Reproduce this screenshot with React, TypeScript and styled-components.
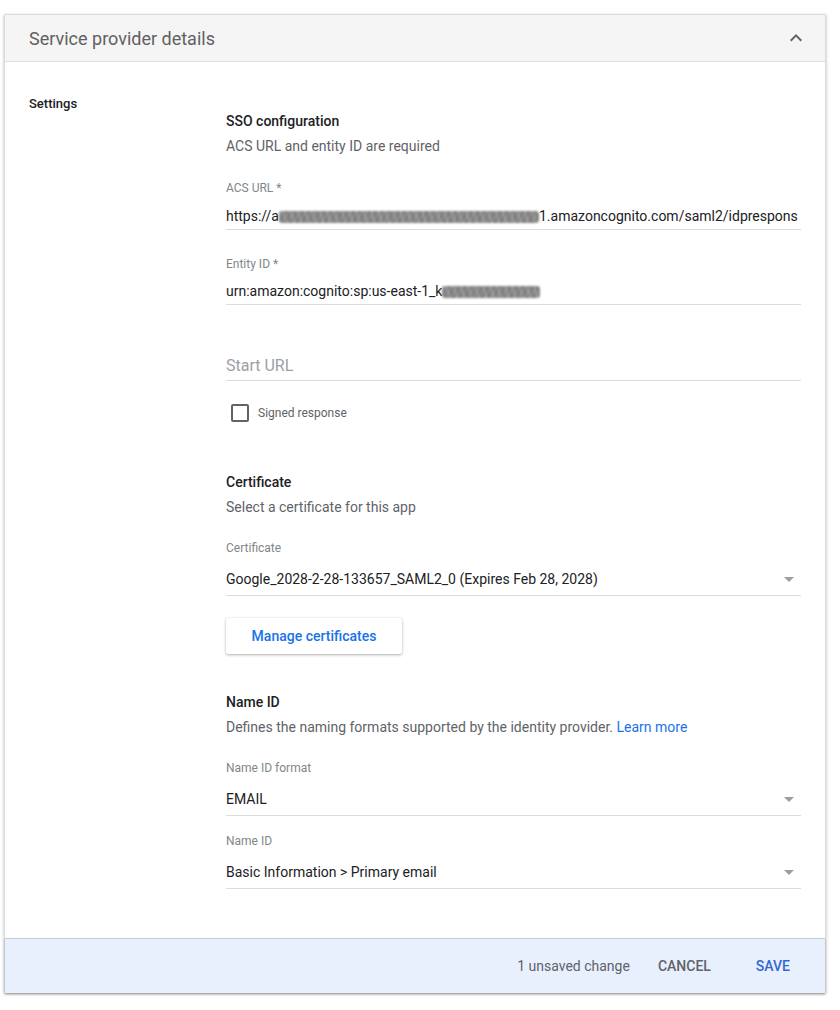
import * as React from "react"
import styled, {createGlobalStyle} from "styled-components"

const Global = createGlobalStyle`
  body {
    margin: 0;
    background: #fff;
    font-family: Roboto, "Liberation Sans", Arial, sans-serif;
    color: #202124;
  }
`

const Page = styled.div`
  padding: 14px 0 17px 4px;
`

const Card = styled.section`
  width: 822px;
  box-sizing: border-box;
  border: 1px solid #dadce0;
  border-bottom: none;
  background: #fff;
  box-shadow: 0 1px 3px rgba(60, 64, 67, 0.35);
`

const Header = styled.div`
  height: 46px;
  display: flex;
  align-items: center;
  justify-content: space-between;
  padding: 0 17px 0 24px;
  background: #f5f5f5;
  border-bottom: 1px solid #e0e0e0;
`

const Title = styled.h2`
  margin: 0;
  font-size: 18px;
  font-weight: 400;
  color: #616161;
`

const Body = styled.div`
  display: grid;
  grid-template-columns: 197px 575px;
  padding: 34px 0 49px 24px;
`

const SideLabel = styled.div`
  font-size: 13px;
  font-weight: 500;
  line-height: 16px;
  color: #202124;
`

const Column = styled.div`
  display: flex;
  flex-direction: column;
  padding-top: 15px;
`

const Heading = styled.div<{ $top?: number }>`
  margin-top: ${p => p.$top ?? 0}px;
  font-size: 14px;
  font-weight: 500;
  line-height: 20px;
  color: #202124;
`

const Desc = styled.div`
  margin-top: 5px;
  font-size: 14px;
  line-height: 20px;
  color: #5f6368;
`

const Link = styled.a`
  color: #1a73e8;
  text-decoration: none;
`

const Field = styled.div<{ $top: number }>`
  margin-top: ${p => p.$top}px;
  display: flex;
  flex-direction: column;
`

const Label = styled.div`
  font-size: 12px;
  line-height: 16px;
  color: #80868b;
`

const Value = styled.div<{ $gap: number; $pad: number }>`
  margin-top: ${p => p.$gap}px;
  padding-bottom: ${p => p.$pad}px;
  border-bottom: 1px solid #dadce0;
  font-size: 14px;
  line-height: 20px;
  color: #202124;
  white-space: nowrap;
  overflow: hidden;
  display: flex;
  align-items: center;
  justify-content: space-between;
`

const Placeholder = styled.div`
  margin-top: 49px;
  padding-bottom: 2px;
  border-bottom: 1px solid #dadce0;
  font-size: 16px;
  line-height: 24px;
  color: #9aa0a6;
`

const Mask = styled.span<{ $w: number }>`
  display: inline-block;
  width: ${p => p.$w}px;
  height: 12px;
  vertical-align: -2px;
  border-radius: 3px;
  background:
    repeating-linear-gradient(73deg, rgba(255, 255, 255, 0.35) 0 1px, transparent 1px 7px),
    repeating-linear-gradient(118deg, rgba(90, 90, 90, 0.3) 0 2px, transparent 2px 5px),
    #8b8b8b;
  filter: blur(0.9px);
`

const CheckRow = styled.label`
  margin-top: 23px;
  display: flex;
  align-items: center;
  gap: 9px;
  padding-left: 5px;
  font-size: 12px;
  color: #5f6368;
`

const Box = styled.span`
  width: 18px;
  height: 18px;
  box-sizing: border-box;
  border: 2px solid #5f6368;
  border-radius: 2px;
`

const RaisedButton = styled.button`
  margin-top: 22px;
  align-self: flex-start;
  width: 176px;
  height: 36px;
  border: none;
  border-radius: 2px;
  background: #fff;
  box-shadow: 0 1px 3px rgba(0, 0, 0, 0.3), 0 0 1px rgba(0, 0, 0, 0.15);
  font-family: inherit;
  font-size: 14px;
  font-weight: 500;
  color: #1a73e8;
`

const Footer = styled.div`
  height: 54px;
  display: flex;
  align-items: center;
  justify-content: flex-end;
  padding-right: 19px;
  background: #e8f0fe;
  border-top: 1px solid #c6ccd5;
  box-shadow: 0 1px 2px rgba(60, 64, 67, 0.4);
`

const Unsaved = styled.span`
  font-size: 14px;
  color: #5f6368;
  margin-right: 12px;
`

const TextButton = styled.button<{ $primary?: boolean }>`
  border: none;
  background: none;
  padding: 0 16px;
  height: 36px;
  min-width: 64px;
  margin-left: ${p => (p.$primary ? 13 : 0)}px;
  font-family: inherit;
  font-size: 14px;
  font-weight: 500;
  color: ${p => (p.$primary ? "#3367d6" : "#5f6368")};
`

const ChevronUp = () => (
  <svg width="24" height="24" viewBox="0 0 24 24">
    <path fill="#5f6368" d="M7.41 15.41L12 10.83l4.59 4.58L18 14l-6-6-6 6z" />
  </svg>
)

const DropArrow = () => (
  <svg width="24" height="20" viewBox="0 2 24 20" style={{flexShrink: 0}}>
    <path fill="#9e9e9e" d="M7 10l5 5 5-5z" />
  </svg>
)

const Select = (props: { label: string; value: string; top: number }) => (
  <Field $top={props.top}>
    <Label>{props.label}</Label>
    <Value $gap={13} $pad={6}>
      <span>{props.value}</span>
      <DropArrow />
    </Value>
  </Field>
)

export default function App() {
  return (
    <Page>
      <Global />
      <Card>
        <Header>
          <Title>Service provider details</Title>
          <ChevronUp />
        </Header>
        <Body>
          <SideLabel>Settings</SideLabel>
          <Column>
            <Heading>SSO configuration</Heading>
            <Desc>ACS URL and entity ID are required</Desc>

            <Field $top={24}>
              <Label>ACS URL *</Label>
              <Value $gap={10} $pad={3}>
                <span>
                  https://a<Mask $w={260} />1.amazoncognito.com/saml2/idprespons
                </span>
              </Value>
            </Field>

            <Field $top={26}>
              <Label>Entity ID *</Label>
              <Value $gap={9} $pad={3}>
                <span>
                  urn:amazon:cognito:sp:us-east-1_k<Mask $w={98} />
                </span>
              </Value>
            </Field>

            <Placeholder>Start URL</Placeholder>

            <CheckRow>
              <Box />
              Signed response
            </CheckRow>

            <Heading $top={50}>Certificate</Heading>
            <Desc>Select a certificate for this app</Desc>

            <Select
              top={23}
              label="Certificate"
              value="Google_2028-2-28-133657_SAML2_0 (Expires Feb 28, 2028)"
            />

            <RaisedButton>Manage certificates</RaisedButton>

            <Heading $top={38}>Name ID</Heading>
            <Desc>
              Defines the naming formats supported by the identity provider.{" "}
              <Link href="#">Learn more</Link>
            </Desc>

            <Select top={23} label="Name ID format" value="EMAIL" />
            <Select top={17} label="Name ID" value="Basic Information > Primary email" />
          </Column>
        </Body>
        <Footer>
          <Unsaved>1 unsaved change</Unsaved>
          <TextButton>CANCEL</TextButton>
          <TextButton $primary>SAVE</TextButton>
        </Footer>
      </Card>
    </Page>
  )
}
